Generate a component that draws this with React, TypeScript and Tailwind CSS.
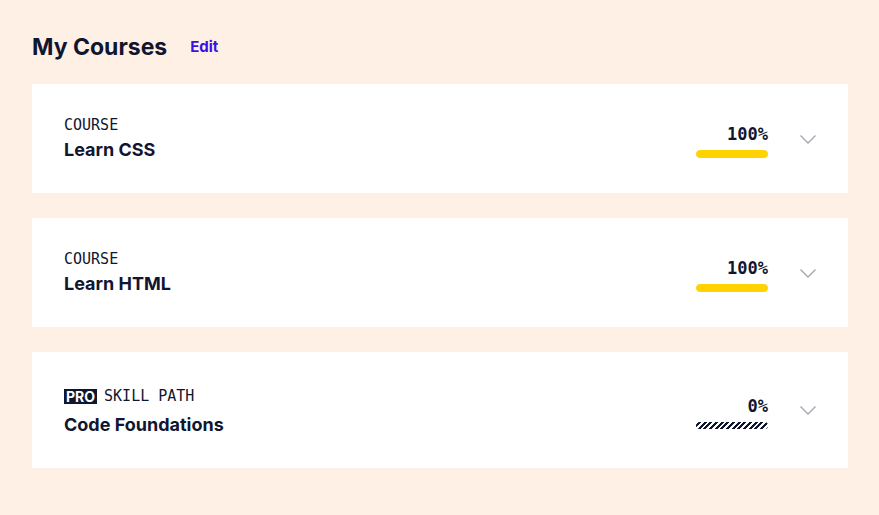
type Course = {
  kind: string;
  title: string;
  progress: number;
  pro?: boolean;
};

const courses: Course[] = [
  { kind: "COURSE", title: "Learn CSS", progress: 100 },
  { kind: "COURSE", title: "Learn HTML", progress: 100 },
  { kind: "SKILL PATH", title: "Code Foundations", progress: 0, pro: true },
];

function ProgressBar({ value }: { value: number }) {
  if (value === 0) {
    return (
      <div className="h-[7px] w-[72px] rounded-full bg-[repeating-linear-gradient(-45deg,#10162f_0_2px,transparent_2px_4px)]" />
    );
  }
  return (
    <div className="h-[8px] w-[72px] rounded-full bg-[#fff0e5] overflow-hidden">
      <div className="h-full rounded-full bg-[#ffd300]" style={{ width: `${value}%` }} />
    </div>
  );
}

function Chevron() {
  return (
    <svg width="16" height="9" viewBox="0 0 16 9" fill="none" className="ml-8 shrink-0">
      <path d="M0.5 0.5 L8 8 L15.5 0.5" stroke="#a3a5ae" strokeWidth="1.3" />
    </svg>
  );
}

function CourseCard({ course }: { course: Course }) {
  return (
    <div className="flex items-center bg-white px-8 pt-8 pb-[31px]">
      <div className="flex-1">
        <div className={`flex items-center gap-[7px] ${course.pro ? "h-[24px] mb-[5px]" : "h-[19px]"}`}>
          {course.pro && (
            <span className="bg-[#10162f] px-[2px] text-[14px] font-bold leading-[15px] text-white font-['Inter',sans-serif]">
              PRO
            </span>
          )}
          <span className="text-[15px] leading-[19px] text-[#10162f] font-['DejaVu_Sans_Mono',monospace]">
            {course.kind}
          </span>
        </div>
        <div className="mt-[3px] text-[18px] font-bold leading-[24px] text-[#10162f]">{course.title}</div>
      </div>
      <div className="mt-[4px] flex flex-col items-end gap-[7px]">
        <span className="text-[17px] font-bold leading-[18px] text-[#10162f] font-['DejaVu_Sans_Mono',monospace]">
          {course.progress}%
        </span>
        <ProgressBar value={course.progress} />
      </div>
      <Chevron />
    </div>
  );
}

export default function App() {
  return (
    <div className="min-h-screen bg-[#fff0e5] px-8 pt-[31px] font-['Inter',sans-serif] text-[#10162f]">
      <div className="flex items-center gap-[23px]">
        <h2 className="text-[23px] font-bold leading-[32px]">My Courses</h2>
        <button className="text-[15px] font-bold leading-[20px] text-[#3a10e5]">Edit</button>
      </div>
      <div className="mt-[21px] flex w-[816px] flex-col gap-[25px]">
        {courses.map((c) => (
          <CourseCard key={c.title} course={c} />
        ))}
      </div>
    </div>
  );
}
